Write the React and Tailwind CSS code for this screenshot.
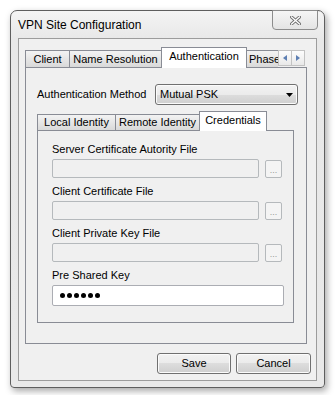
import React from 'react';

const TAB_IDLE =
  'shrink-0 -ml-px first:ml-0 flex items-center border border-[#898c95] bg-[linear-gradient(#f3f3f3,#e6e6e6_50%,#d9d9d9)] leading-none whitespace-nowrap';
const TAB_ACTIVE =
  'shrink-0 -ml-px flex items-center justify-center border border-b-0 border-[#898c95] bg-white leading-none whitespace-nowrap';

const CloseGlyph = () => (
  <svg width="11" height="9" viewBox="0 0 11 9">
    <path d="M1.5 1 L9.5 8 M9.5 1 L1.5 8" stroke="#6f6f6f" strokeWidth="3.2" strokeLinecap="square" />
    <path d="M1.5 1 L9.5 8 M9.5 1 L1.5 8" stroke="#ffffff" strokeWidth="1.3" strokeLinecap="square" />
  </svg>
);

const ScrollArrow = ({ dir }) => (
  <div className="w-[14px] h-[16px] -ml-px first:ml-0 flex items-center justify-center border border-[#c3c3c3] bg-[linear-gradient(#fdfdfd,#e9e9e9)]">
    <svg width="4" height="6" viewBox="0 0 4 6">
      {dir === 'left' ? (
        <polygon points="4,0 4,6 0,3" fill="#5d7fb3" />
      ) : (
        <polygon points="0,0 0,6 4,3" fill="#5d7fb3" />
      )}
    </svg>
  </div>
);

const FileField = ({ label }) => (
  <div className="flex flex-col">
    <span className="h-[14px] leading-[14px]">{label}</span>
    <div className="mt-[3px] flex items-center">
      <div className="w-[207px] h-[19px] rounded-[2px] border border-[#b5b9bc] bg-[#f0f0f0]" />
      <div className="ml-[6px] w-[17px] h-[18px] rounded-[2px] border border-[#b5b9bc] bg-[#f4f4f4] flex items-center justify-center text-[9px] leading-none text-[#9a9a9a] pt-[3px]">
        ...
      </div>
    </div>
  </div>
);

const Button = ({ label, className }) => (
  <div
    className={`${className} h-[21px] rounded-[3px] border border-[#707070] bg-[linear-gradient(#f2f2f2_0%,#ebebeb_50%,#dddddd_50%,#cfcfcf_100%)] shadow-[inset_0_0_0_1px_#fbfbfb] flex items-center justify-center`}
  >
    {label}
  </div>
);

export default function App() {
  return (
    <div className="w-[336px] h-[395px] bg-white pt-[10px] pl-[10px] font-['Liberation_Sans',Arial,sans-serif] text-[11px] text-black">
      {/* window frame */}
      <div className="w-[315px] h-[378px] flex flex-col rounded-t-[7px] rounded-b-[4px] border border-[#5e5e5e] bg-[linear-gradient(#f4f4f4,#e8e8e8_28px,#e9e9e9)] shadow-[2px_3px_7px_rgba(0,0,0,0.35)]">
        {/* title bar */}
        <div className="h-[27px] flex items-start">
          <span className="ml-[7px] mt-[7px] text-[12px] leading-[14px]">VPN Site Configuration</span>
          <div className="ml-auto mr-[6px] -mt-px w-[46px] h-[20px] rounded-b-[4px] border border-[#8d8d8d] bg-[linear-gradient(#f6f6f6,#e4e4e4)] flex items-center justify-center">
            <CloseGlyph />
          </div>
        </div>

        {/* client area */}
        <div className="mx-[7px] h-[343px] border border-[#9c9c9c] bg-[#f0f0f0] flex flex-col">
          {/* outer tab control */}
          <div className="ml-[6px] mt-[8px] w-[282px] flex flex-col">
            <div className="relative z-10 h-[21px] flex items-start">
              <div className="w-[253px] h-[21px] overflow-hidden flex items-end">
                <div className={`${TAB_IDLE} w-[45px] h-[18px] justify-center`}>Client</div>
                <div className={`${TAB_IDLE} w-[93px] h-[18px] justify-center`}>Name Resolution</div>
                <div className={`${TAB_ACTIVE} w-[86px] h-[21px] pb-[3px]`}>Authentication</div>
                <div className={`${TAB_IDLE} w-[60px] h-[18px] justify-start pl-[2px]`}>Phase</div>
              </div>
              <div className="mt-[3px] flex">
                <ScrollArrow dir="left" />
                <ScrollArrow dir="right" />
              </div>
            </div>

            <div className="-mt-px h-[277px] border border-[#898c95] bg-[#f0f0f0] flex flex-col">
              {/* authentication method */}
              <div className="mt-[16px] ml-[11px] flex items-center">
                <span className="w-[118px]">Authentication Method</span>
                <div className="w-[143px] h-[21px] rounded-[3px] border border-[#707070] bg-[linear-gradient(#f2f2f2_0%,#ebebeb_50%,#dddddd_50%,#cfcfcf_100%)] shadow-[inset_0_0_0_1px_#fbfbfb] flex items-center pl-[4px] pr-[4px]">
                  <span>Mutual PSK</span>
                  <svg className="ml-auto" width="7" height="4" viewBox="0 0 7 4">
                    <polygon points="0,0 7,0 3.5,4" fill="#000" />
                  </svg>
                </div>
              </div>

              {/* inner tab control */}
              <div className="ml-[11px] mt-[6px] w-[257px] flex flex-col">
                <div className="relative z-10 h-[20px] flex items-end">
                  <div className={`${TAB_IDLE} w-[79px] h-[17px] justify-center`}>Local Identity</div>
                  <div className={`${TAB_IDLE} w-[85px] h-[17px] justify-center`}>Remote Identity</div>
                  <div className={`${TAB_ACTIVE} w-[68px] h-[20px] pb-[2px]`}>Credentials</div>
                </div>
                <div className="-mt-px h-[193px] border border-[#898c95] bg-[#f0f0f0] pl-[14px] pt-[11px] flex flex-col gap-[6px]">
                  <FileField label="Server Certificate Autority File" />
                  <FileField label="Client Certificate File" />
                  <FileField label="Client Private Key File" />
                  <div className="flex flex-col">
                    <span className="h-[14px] leading-[14px]">Pre Shared Key</span>
                    <div className="mt-[3px] w-[232px] h-[21px] rounded-[2px] border border-[#abadb3] bg-white flex items-center pl-[7px] gap-[2px]">
                      {[0, 1, 2, 3, 4, 5].map((i) => (
                        <span key={i} className="w-[5px] h-[5px] rounded-full bg-black" />
                      ))}
                    </div>
                  </div>
                </div>
              </div>
            </div>
          </div>

          {/* buttons */}
          <div className="mt-[9px] pr-[5px] flex justify-end gap-[5px]">
            <Button label="Save" className="w-[74px]" />
            <Button label="Cancel" className="w-[75px]" />
          </div>
        </div>
      </div>
    </div>
  );
}
